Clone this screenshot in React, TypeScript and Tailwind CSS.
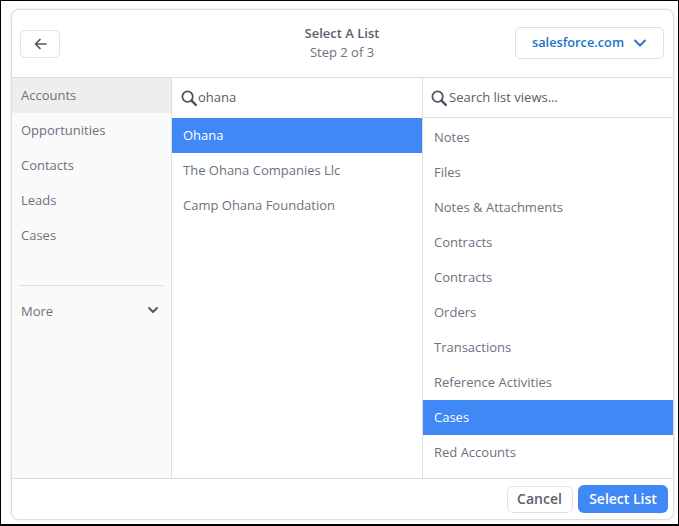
import React from 'react';
import { ChevronDown } from 'lucide-react';

const objects = ['Accounts', 'Opportunities', 'Contacts', 'Leads', 'Cases'];
const companies = ['Ohana', 'The Ohana Companies Llc', 'Camp Ohana Foundation'];
const listViews = ['Notes', 'Files', 'Notes & Attachments', 'Contracts', 'Contracts', 'Orders', 'Transactions', 'Reference Activities', 'Cases', 'Red Accounts'];

const SearchIcon = () => (
  <svg width="16" height="16" viewBox="0 0 16 16" fill="none" className="shrink-0 text-[#4f5661]">
    <circle cx="6.6" cy="6.6" r="5.2" stroke="currentColor" strokeWidth="1.8" />
    <path d="M10.6 10.6 14.8 14.8" stroke="currentColor" strokeWidth="2.5" strokeLinecap="round" />
  </svg>
);

const App: React.FC = () => {
  return (
    <div className="w-[679px] h-[526px] bg-white border-t border-l border-r border-b-2 border-black pt-2 pl-[10px] pr-[5px] pb-[5px] overflow-hidden font-['Open_Sans',sans-serif]">
      <div className="w-[663px] h-[511px] flex flex-col border border-[#dedede] rounded-lg overflow-hidden shadow-[0_0_3px_rgba(0,0,0,0.12)]">
        {/* header */}
        <div className="h-[68px] shrink-0 grid grid-cols-[1fr_auto_1fr] items-center pl-2 pr-[9px] border-b border-[#dedede]">
          <button className="w-[40px] h-[28px] mt-px flex items-center justify-center border border-[#e2e2e2] rounded-[5px] text-[#4f5661]">
            <svg width="13" height="12" viewBox="0 0 13 12" fill="none">
              <path d="M12 6H1.5M6 1.5 1.5 6 6 10.5" stroke="currentColor" strokeWidth="1.7" strokeLinecap="round" strokeLinejoin="round" />
            </svg>
          </button>
          <div className="text-center text-[13px] leading-[19px] text-[#6b7280] -mt-[2px]">
            <div className="font-semibold text-[#59606b]">Select A List</div>
            <div>Step 2 of 3</div>
          </div>
          <button className="justify-self-end w-[149px] h-[32px] -mt-px flex items-center pl-4 gap-[6px] border border-[#e0e0e0] rounded-[5px] text-[12.75px] font-semibold text-[#1a73c9]">
            salesforce.com
            <ChevronDown size={20} strokeWidth={2.2} />
          </button>
        </div>

        {/* columns */}
        <div className="flex-1 flex min-h-0">
          <div className="w-[160px] shrink-0 bg-[#fafafa] border-r border-[#dedede] text-[13px] text-[#6b7280]">
            {objects.map((o, i) => (
              <div key={o} className={`h-[35px] flex items-center pl-[9px] ${i === 0 ? 'bg-[#eeeeee]' : ''}`}>{o}</div>
            ))}
            <div className="mt-[32px] ml-[7px] mr-2 border-t border-[#dedede] h-[52px] flex items-center justify-between pl-[2px] pr-[2px]">
              <span>More</span>
              <ChevronDown size={16} strokeWidth={2.8} className="text-[#4f5661] -mt-1" />
            </div>
          </div>

          <div className="w-[251px] shrink-0 border-r border-[#dedede] text-[13px] text-[#6b7280]">
            <div className="h-10 flex items-center pl-[9px] gap-[1px] text-[#565d68]">
              <SearchIcon />
              <span>ohana</span>
            </div>
            {companies.map((c, i) => (
              <div key={c} className={`h-[35px] flex items-center pl-[11px] ${i === 0 ? 'bg-[#3f88f5] text-white' : ''}`}>{c}</div>
            ))}
          </div>

          <div className="flex-1 min-w-0 text-[13px] text-[#6b7280]">
            <div className="h-10 flex items-center pl-2 gap-[2px] text-[#565d68] border-b border-[#dedede]">
              <SearchIcon />
              <span>Search list views...</span>
            </div>
            <div className="pt-[2px]">
              {listViews.map((v, i) => (
                <div key={i} className={`h-[35px] flex items-center pl-[11px] ${i === 8 ? 'bg-[#3f88f5] text-white' : ''}`}>{v}</div>
              ))}
            </div>
          </div>
        </div>

        {/* footer */}
        <div className="h-[41px] shrink-0 flex items-center justify-end gap-[5px] pr-[5px] border-t border-[#dedede]">
          <button className="w-[66px] h-[27px] pb-px pr-px border border-[#e2e2e2] rounded-[6px] text-[14px] font-semibold text-[#59606b]">Cancel</button>
          <button className="w-[90px] h-[28px] pb-px bg-[#3f88f5] rounded-[6px] text-[14px] font-semibold text-white">Select List</button>
        </div>
      </div>
    </div>
  );
};

export default App;
